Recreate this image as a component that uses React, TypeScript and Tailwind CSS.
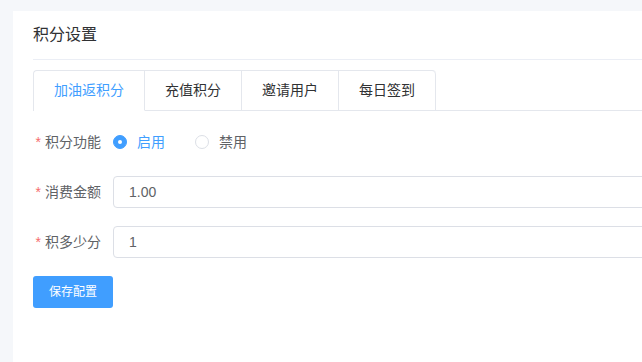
import React from "react";

const font = { fontFamily: '"Liberation Sans", "Noto Sans CJK SC", sans-serif' };

export default function App() {
  const tabs = ["加油返积分", "充值积分", "邀请用户", "每日签到"];
  return (
    <div className="h-screen w-full overflow-hidden bg-[#f5f7fa] pl-[13px] pt-[11px]" style={font}>
      <div className="w-[720px] h-[400px] bg-white px-5">
        <div className="h-[49px] flex items-center border-b border-[#ebeef5] text-[16px] text-[#303133]">
          积分设置
        </div>
        <div className="mt-[10px] flex">
          <div className="flex border-l border-t border-[#e4e7ed] rounded-tl-[4px] rounded-tr-[4px]">
            {tabs.map((t, i) => (
              <div
                key={t}
                className={
                  "h-[40px] px-5 flex items-center text-[14px] border-r border-r-[#e4e7ed] border-b " +
                  (i === 0
                    ? "text-[#409eff] border-b-white"
                    : "text-[#303133] border-b-[#e4e7ed]") +
                  (i === tabs.length - 1 ? " rounded-tr-[4px]" : "")
                }
              >
                {t}
              </div>
            ))}
          </div>
          <div className="flex-1 border-b border-[#e4e7ed]" />
        </div>
        <div className="mt-[15px] flex flex-col gap-[18px] text-[14px]">
          <div className="flex items-center h-[32px]">
            <label className="w-[80px] pr-3 text-right text-[#606266]">
              <span className="text-[#f56c6c] mr-1">*</span>积分功能
            </label>
            <div className="flex items-center">
              <span className="flex items-center mr-[30px]">
                <span className="w-[14px] h-[14px] rounded-full bg-[#409eff] border border-[#409eff] flex items-center justify-center">
                  <span className="w-[4px] h-[4px] rounded-full bg-white" />
                </span>
                <span className="pl-[10px] text-[#409eff]">启用</span>
              </span>
              <span className="flex items-center">
                <span className="w-[14px] h-[14px] rounded-full bg-white border border-[#dcdfe6]" />
                <span className="pl-[10px] text-[#606266]">禁用</span>
              </span>
            </div>
          </div>
          <div className="flex items-center h-[32px]">
            <label className="w-[80px] pr-3 text-right text-[#606266]">
              <span className="text-[#f56c6c] mr-1">*</span>消费金额
            </label>
            <div className="flex-1 h-[32px] border border-[#dcdfe6] rounded-[4px] pl-[15px] flex items-center text-[#606266]">
              1.00
            </div>
          </div>
          <div className="flex items-center h-[32px]">
            <label className="w-[80px] pr-3 text-right text-[#606266]">
              <span className="text-[#f56c6c] mr-1">*</span>积多少分
            </label>
            <div className="flex-1 h-[32px] border border-[#dcdfe6] rounded-[4px] pl-[15px] flex items-center text-[#606266]">
              1
            </div>
          </div>
          <div>
            <button className="w-[80px] h-[32px] bg-[#409eff] text-white text-[12px] rounded-[3px]">
              保存配置
            </button>
          </div>
        </div>
      </div>
    </div>
  );
}
